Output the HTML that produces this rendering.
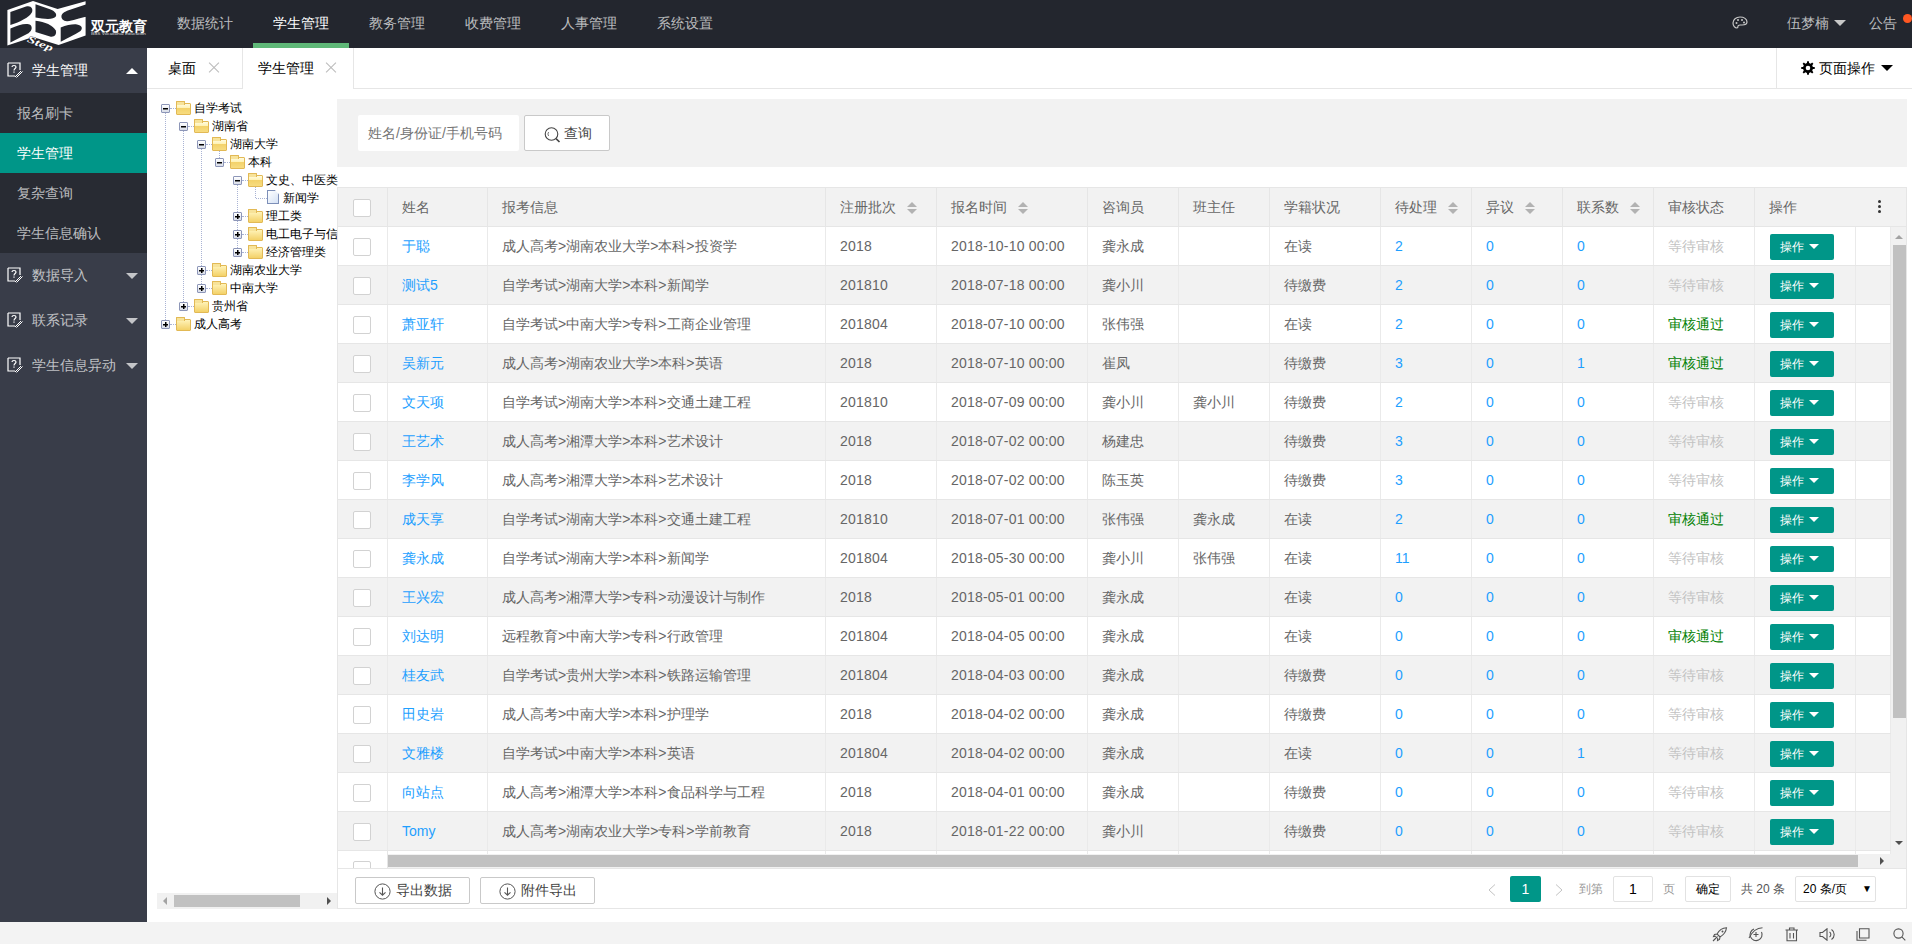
<!DOCTYPE html>
<html><head><meta charset="utf-8"><title>双元教育</title>
<style>
*{margin:0;padding:0;box-sizing:border-box}
html,body{width:1912px;height:944px;overflow:hidden;background:#fff;font-family:"Liberation Sans",sans-serif;font-size:14px;color:#666}
.abs{position:absolute}
/* header */
#hd{position:absolute;left:0;top:0;width:1912px;height:48px;background:#23262E;z-index:5}
#logo{overflow:visible}
#logo{position:absolute;left:0;top:0;width:150px;height:48px}
.nav{position:absolute;top:0;height:48px;line-height:46px;width:96px;text-align:center;color:rgba(255,255,255,.7);font-size:14px}
.nav.on{color:#fff}
.nav.on:after{content:"";position:absolute;left:0;right:0;bottom:0;height:5px;background:#5FB878}
/* sidebar */
#sd{position:absolute;left:0;top:48px;width:147px;height:874px;background:#393D49}
.si{position:absolute;left:0;width:147px;height:45px;line-height:45px;color:rgba(255,255,255,.7);padding-left:32px}
.si.top{color:#fff;background:#393D49}
.si i.ic{position:absolute;left:7px;top:15px;width:14px;height:15px}
.si em{position:absolute;left:126px;top:20px;width:0;height:0;border-left:6px solid transparent;border-right:6px solid transparent;border-top:6px solid rgba(255,255,255,.7)}
.si.top em{border-top:0;border-bottom:6px solid #fff;top:20px}
#sub{position:absolute;left:0;top:45px;width:147px;height:160px;background:#282B33}
.sub{position:absolute;left:0;width:147px;height:40px;line-height:40px;padding-left:17px;color:rgba(255,255,255,.7)}
.sub.on{background:#009688;color:#fff}
/* tabs */
#tabs{position:absolute;left:147px;top:48px;width:1765px;height:41px;background:#fff;border-bottom:1px solid #e6e6e6}
.tab{position:absolute;top:0;height:41px;line-height:40px;color:#000;font-size:14px}
.tab .x{position:absolute;top:15px;width:10px;height:10px}
.tab .x:before,.tab .x:after{content:"";position:absolute;left:-2px;top:4px;width:14px;height:1px;background:#bbb;transform:rotate(45deg)}
.tab .x:after{transform:rotate(-45deg)}
#pgop{position:absolute;left:1776px;top:48px;width:136px;height:40px;border-left:1px solid #e6e6e6;line-height:40px;color:#000}
/* tree */
#tree{position:absolute;left:147px;top:89px;width:190px;height:833px;background:#fff}
.ex{position:absolute;width:9px;height:9px;border:1px solid #8d96b8;background:linear-gradient(#fff,#d8dde8);border-radius:1px}
.ex b.h{position:absolute;left:1px;top:3px;width:5px;height:1px;background:#000;box-shadow:0 0.5px 0 #000}
.tl{position:absolute;width:1px;border-left:1px dotted #a9b3d4}
.th2{position:absolute;height:1px;border-top:1px dotted #a9b3d4}
.ex b.v{position:absolute;left:3px;top:1px;width:1px;height:5px;background:#000;box-shadow:0.5px 0 0 #000}
.fold{position:absolute;width:15px;height:12px;background:linear-gradient(#fff3b8,#f3d168);border:1px solid #e2b955;border-radius:1px}
.fold:before{content:"";position:absolute;left:-1px;top:-3px;width:7px;height:3px;background:#f7e39a;border:1px solid #e2b955;border-bottom:0;border-radius:1px 1px 0 0}
.fold.open{background:linear-gradient(#fffbe0 0,#fff3b8 35%,#f3d168 36%,#f7dc80 100%)}
.doc{position:absolute;width:12px;height:14px;border:1px solid #7d8fb8;background:linear-gradient(135deg,#fff,#d5e2f5);clip-path:polygon(0 0,65% 0,100% 30%,100% 100%,0 100%)}
.tt{position:absolute;font-size:12px;line-height:18px;color:#000;white-space:nowrap}
/* search */
#sp{position:absolute;left:337px;top:99px;width:1570px;height:68px;background:#f2f2f2}
#sinput{position:absolute;left:358px;top:115px;width:161px;height:36px;background:#fff;border-radius:2px;line-height:36px;padding-left:10px;color:#757575;font-size:14px}
#sbtn{position:absolute;left:524px;top:115px;width:86px;height:36px;background:#fff;border:1px solid #C9C9C9;border-radius:2px;line-height:34px;padding-left:39px;color:#444}
/* table */
#tbl{position:absolute;left:337px;top:187px;width:1570px;height:722px;border:1px solid #e6e6e6;overflow:hidden;background:#fff}
#th{position:absolute;left:0;top:0;width:1570px;height:39px;background:#f2f2f2;border-bottom:1px solid #e6e6e6}
.th,.td{position:absolute;top:0;height:38px;line-height:38px;padding-left:14px;border-right:1px solid #e6e6e6;white-space:nowrap;overflow:hidden}
.th{color:#666}
.td.c3,.td.c4{letter-spacing:0.2px}
.th.c12,.th.c13{border-right:0}
.td{border-right-color:#eaeaea}
#tb{position:absolute;left:0;top:39px;width:1570px;height:627px;overflow:hidden}
.tr{position:absolute;left:0;width:1553px;height:39px;border-bottom:1px solid #e6e6e6;background:#fff}
.tr.even{background:#f2f2f2}
.cb{position:absolute;left:15px;top:11px;width:18px;height:18px;border:1px solid #d2d2d2;background:#fff;border-radius:2px}
.lk{color:#1E9FFF}
.pass{color:#008000}
.wait{color:#c2c2c2}
.opbtn{position:absolute;left:15px;top:7px;width:64px;height:26px;background:#009688;color:#fff;border-radius:2px;line-height:26px;padding-left:10px;font-size:12px}
.opbtn em{position:absolute;left:39px;top:10px;border-left:5px solid transparent;border-right:5px solid transparent;border-top:5px solid #fff}
.sort{position:absolute;top:14px;width:10px;height:12px}
.sort em{position:absolute;left:0;border-left:5px solid transparent;border-right:5px solid transparent}
.sort .up{top:0;border-bottom:5px solid #b2b2b2}
.sort .dn{top:7px;border-top:5px solid #b2b2b2}
.more{position:absolute;left:22px;top:12px;width:3px;height:14px}
.more b{display:block;width:3px;height:3px;background:#333;border-radius:50%;margin-bottom:2px}
#vs{position:absolute;left:1553px;top:39px;width:17px;height:627px;background:#f1f1f1}
#vthumb{position:absolute;left:2px;top:18px;width:13px;height:473px;background:#c1c1c1}
#hs{position:absolute;left:0;top:666px;width:1570px;height:14px;background:#f1f1f1}
#hthumb{position:absolute;left:50px;top:1px;width:1470px;height:12px;background:#c1c1c1}
#tool{position:absolute;left:0;top:680px;width:1570px;height:41px;border-top:1px solid #e6e6e6;background:#fff}
.ebtn{position:absolute;top:8px;width:115px;height:27px;border:1px solid #C9C9C9;border-radius:2px;background:#fff;line-height:25px;padding-left:40px;color:#444;font-size:14px}
.ebtn i{position:absolute;left:19px;top:5px;width:15px;height:15px;border:1px solid #666;border-radius:50%}
/* footer */
#ft{position:absolute;left:0;top:922px;width:1912px;height:22px;background:#f3f3f3}
</style></head><body>
<div id="hd">
  <svg id="logo" width="150" height="48" viewBox="0 0 150 48">
    <path fill="#fff" d="M7.4,10 L33,1 L57.6,9 L85.6,1.3 L85.6,35.6 L58.6,45 L33,37 L7.4,45.5 Z"/>
    <g fill="#23262E">
      <path d="M10.4,12 L26,6.6 C31,5 33.5,9 31.8,12.5 C29.5,17 20,22 10.4,25 Z"/>
      <path d="M10.4,28.5 C19,24.5 27,22.5 30.5,25 C33,27.5 31.5,32 27,34 L10.4,42.5 Z"/>
      <path d="M35.5,4.2 L50,9.2 C55,11 57,14 55.8,16.5 C53.5,20 44,19 35.5,17.5 Z"/>
      <path d="M35.5,20.7 C45,21.5 53,25.5 55.8,30.5 C57,34.5 54,37.5 50,36.5 L35.5,32 Z"/>
      <path d="M61.5,15.5 C62.5,12.5 66,11.2 70,9.8 L88,3.8 L88,16.8 C79,17.3 72,21.5 67,21.3 C63,21 61,18.5 61.5,15.5 Z"/>
      <path d="M60.7,27.4 C67,25 73,24 77,24.5 C82,25.2 83,28.5 80.5,31 C78,33 70,37 60.7,41.7 Z"/>
    </g>
    <text x="0" y="0" fill="#fff" stroke="#23262E" stroke-width="0.6" paint-order="stroke" font-size="10" font-weight="bold" font-style="italic" font-family="Liberation Serif" textLength="27" lengthAdjust="spacingAndGlyphs" transform="translate(26.5,41.5) rotate(22)">Step</text>
    <text x="91" y="30.5" fill="#fff" font-size="13.6" font-weight="bold" font-family="Liberation Sans">双元教育</text>
    <text x="91" y="35" fill="#ddd" font-size="3.6" font-family="Liberation Sans" textLength="55" lengthAdjust="spacingAndGlyphs">BBS Vocational Education</text>
  </svg>
  <div class="nav" style="left:157px">数据统计</div>
  <div class="nav on" style="left:253px">学生管理</div>
  <div class="nav" style="left:349px">教务管理</div>
  <div class="nav" style="left:445px">收费管理</div>
  <div class="nav" style="left:541px">人事管理</div>
  <div class="nav" style="left:637px">系统设置</div>
  <svg class="abs" style="left:1732px;top:16px" width="16" height="14" viewBox="0 0 16 14"><path d="M8 1C4 1 1 3.5 1 7c0 3 2 5 4 5 1 0 1-1 1-2s1-1 2-1h2c3 0 5-1 5-3 0-3-3-5-7-5z" fill="none" stroke="#c8c8c8" stroke-width="1.2"/><circle cx="4.5" cy="7" r="1" fill="#c8c8c8"/><circle cx="6" cy="4" r="1" fill="#c8c8c8"/><circle cx="10" cy="4" r="1" fill="#c8c8c8"/><circle cx="12" cy="6.5" r="1" fill="#c8c8c8"/></svg>
  <div class="abs" style="left:1787px;top:0;line-height:46px;color:rgba(255,255,255,.7)">伍梦楠</div>
  <div class="abs" style="left:1834px;top:20px;border-left:6px solid transparent;border-right:6px solid transparent;border-top:6px solid #c8c8c8"></div>
  <div class="abs" style="left:1869px;top:0;line-height:46px;color:rgba(255,255,255,.7)">公告</div>
  <div class="abs" style="left:1903px;top:14px;width:9px;height:9px;border-radius:50%;background:#FF5722"></div>
</div>

<div id="sd">
  <div class="si top" style="top:0"><svg class="ic" width="16" height="16" viewBox="0 0 16 16" style="position:absolute;left:7px;top:14px"><path d="M1,1 H13 V8 M8,14 H1 V1" fill="none" stroke="#fff" stroke-width="1.2"/><path d="M5,5 C5,3 9,3 9,5 C9,6.5 7,6.5 7,8.5" fill="none" stroke="#fff" stroke-width="1.2"/><rect x="6.4" y="9.5" width="1.2" height="1.2" fill="#fff"/><path d="M8,15 L14,9 M9.5,15.5 L15.5,9.5" stroke="#fff" stroke-width="1"/></svg>学生管理<em></em></div>
  <div id="sub">
    <div class="sub" style="top:0">报名刷卡</div>
    <div class="sub on" style="top:40px">学生管理</div>
    <div class="sub" style="top:80px">复杂查询</div>
    <div class="sub" style="top:120px">学生信息确认</div>
  </div>
  <div class="si" style="top:205px"><svg class="ic" width="16" height="16" viewBox="0 0 16 16" style="position:absolute;left:7px;top:14px"><path d="M1,1 H13 V8 M8,14 H1 V1" fill="none" stroke="#fff" stroke-width="1.2"/><path d="M5,5 C5,3 9,3 9,5 C9,6.5 7,6.5 7,8.5" fill="none" stroke="#fff" stroke-width="1.2"/><rect x="6.4" y="9.5" width="1.2" height="1.2" fill="#fff"/><path d="M8,15 L14,9 M9.5,15.5 L15.5,9.5" stroke="#fff" stroke-width="1"/></svg>数据导入<em></em></div>
  <div class="si" style="top:250px"><svg class="ic" width="16" height="16" viewBox="0 0 16 16" style="position:absolute;left:7px;top:14px"><path d="M1,1 H13 V8 M8,14 H1 V1" fill="none" stroke="#fff" stroke-width="1.2"/><path d="M5,5 C5,3 9,3 9,5 C9,6.5 7,6.5 7,8.5" fill="none" stroke="#fff" stroke-width="1.2"/><rect x="6.4" y="9.5" width="1.2" height="1.2" fill="#fff"/><path d="M8,15 L14,9 M9.5,15.5 L15.5,9.5" stroke="#fff" stroke-width="1"/></svg>联系记录<em></em></div>
  <div class="si" style="top:295px"><svg class="ic" width="16" height="16" viewBox="0 0 16 16" style="position:absolute;left:7px;top:14px"><path d="M1,1 H13 V8 M8,14 H1 V1" fill="none" stroke="#fff" stroke-width="1.2"/><path d="M5,5 C5,3 9,3 9,5 C9,6.5 7,6.5 7,8.5" fill="none" stroke="#fff" stroke-width="1.2"/><rect x="6.4" y="9.5" width="1.2" height="1.2" fill="#fff"/><path d="M8,15 L14,9 M9.5,15.5 L15.5,9.5" stroke="#fff" stroke-width="1"/></svg>学生信息异动<em></em></div>
</div>

<div id="tabs">
  <div class="tab" style="left:0;width:95px;padding-left:21px">桌面<span class="x" style="left:62px"></span></div>
  <div class="tab" style="left:95px;width:112px;padding-left:15px;border-left:1px solid #e6e6e6;border-right:1px solid #e6e6e6;background:#fff;height:41px">学生管理<span class="x" style="left:83px"></span></div>
</div>
<div id="pgop"><svg class="abs" style="left:24px;top:13px" width="14" height="14" viewBox="0 0 14 14"><path fill="#000" fill-rule="evenodd" d="M11.88,5.91 L13.74,6.12 L13.74,7.88 L11.88,8.09 L11.22,9.68 L12.39,11.14 L11.14,12.39 L9.68,11.22 L8.09,11.88 L7.88,13.74 L6.12,13.74 L5.91,11.88 L4.32,11.22 L2.86,12.39 L1.61,11.14 L2.78,9.68 L2.12,8.09 L0.26,7.88 L0.26,6.12 L2.12,5.91 L2.78,4.32 L1.61,2.86 L2.86,1.61 L4.32,2.78 L5.91,2.12 L6.12,0.26 L7.88,0.26 L8.09,2.12 L9.68,2.78 L11.14,1.61 L12.39,2.86 L11.22,4.32 Z M9.30,7.00 A2.3,2.3 0 1 0 4.70,7.00 A2.3,2.3 0 1 0 9.30,7.00 Z"/></svg><span class="abs" style="left:42px;top:0">页面操作</span><span class="abs" style="left:104px;top:17px;border-left:6px solid transparent;border-right:6px solid transparent;border-top:6px solid #000"></span></div>

<div id="tree"><span class="th2" style="left:23px;top:235px;width:6px"></span><span class="th2" style="left:41px;top:217px;width:6px"></span><span class="th2" style="left:59px;top:199px;width:6px"></span><span class="th2" style="left:59px;top:181px;width:6px"></span><span class="th2" style="left:95px;top:163px;width:6px"></span><span class="th2" style="left:95px;top:145px;width:6px"></span><span class="th2" style="left:95px;top:127px;width:6px"></span><span class="th2" style="left:109px;top:109px;width:11px"></span><span class="th2" style="left:95px;top:91px;width:6px"></span><span class="th2" style="left:77px;top:73px;width:6px"></span><span class="th2" style="left:59px;top:55px;width:6px"></span><span class="th2" style="left:41px;top:37px;width:6px"></span><span class="th2" style="left:23px;top:19px;width:6px"></span><span class="tl" style="left:108px;top:97px;height:12px"></span><span class="tl" style="left:90px;top:91px;height:72px"></span><span class="tl" style="left:72px;top:61px;height:12px"></span><span class="tl" style="left:54px;top:55px;height:144px"></span><span class="tl" style="left:36px;top:37px;height:180px"></span><span class="tl" style="left:18px;top:19px;height:216px"></span><span class="ex" style="left:14px;top:15px"><b class="h"></b></span><span class="fold open" style="left:29px;top:14px"></span><span class="tt" style="left:47px;top:10px">自学考试</span><span class="ex" style="left:32px;top:33px"><b class="h"></b></span><span class="fold open" style="left:47px;top:32px"></span><span class="tt" style="left:65px;top:28px">湖南省</span><span class="ex" style="left:50px;top:51px"><b class="h"></b></span><span class="fold open" style="left:65px;top:50px"></span><span class="tt" style="left:83px;top:46px">湖南大学</span><span class="ex" style="left:68px;top:69px"><b class="h"></b></span><span class="fold open" style="left:83px;top:68px"></span><span class="tt" style="left:101px;top:64px">本科</span><span class="ex" style="left:86px;top:87px"><b class="h"></b></span><span class="fold open" style="left:101px;top:86px"></span><span class="tt" style="left:119px;top:82px">文史、中医类</span><span class="doc" style="left:120px;top:101px"></span><span class="tt" style="left:136px;top:100px">新闻学</span><span class="ex" style="left:86px;top:123px"><b class="h"></b><b class="v"></b></span><span class="fold" style="left:101px;top:122px"></span><span class="tt" style="left:119px;top:118px">理工类</span><span class="ex" style="left:86px;top:141px"><b class="h"></b><b class="v"></b></span><span class="fold" style="left:101px;top:140px"></span><span class="tt" style="left:119px;top:136px">电工电子与信息类</span><span class="ex" style="left:86px;top:159px"><b class="h"></b><b class="v"></b></span><span class="fold" style="left:101px;top:158px"></span><span class="tt" style="left:119px;top:154px">经济管理类</span><span class="ex" style="left:50px;top:177px"><b class="h"></b><b class="v"></b></span><span class="fold" style="left:65px;top:176px"></span><span class="tt" style="left:83px;top:172px">湖南农业大学</span><span class="ex" style="left:50px;top:195px"><b class="h"></b><b class="v"></b></span><span class="fold" style="left:65px;top:194px"></span><span class="tt" style="left:83px;top:190px">中南大学</span><span class="ex" style="left:32px;top:213px"><b class="h"></b><b class="v"></b></span><span class="fold" style="left:47px;top:212px"></span><span class="tt" style="left:65px;top:208px">贵州省</span><span class="ex" style="left:14px;top:231px"><b class="h"></b><b class="v"></b></span><span class="fold" style="left:29px;top:230px"></span><span class="tt" style="left:47px;top:226px">成人高考</span>
  <div class="abs" style="left:10px;top:804px;width:180px;height:16px;background:#f1f1f1"><div class="abs" style="left:17px;top:2px;width:126px;height:12px;background:#c1c1c1"></div><span class="abs" style="left:6px;top:4px;border-top:4px solid transparent;border-bottom:4px solid transparent;border-right:4px solid #a3a3a3"></span><span class="abs" style="left:170px;top:4px;border-top:4px solid transparent;border-bottom:4px solid transparent;border-left:4px solid #505050"></span></div>
</div>

<div id="sp"></div>
<div id="sinput">姓名/身份证/手机号码</div>
<div id="sbtn"><svg class="abs" style="left:18px;top:10px" width="18" height="18" viewBox="0 0 18 18"><circle cx="8.5" cy="8" r="6.3" fill="none" stroke="#444" stroke-width="1.1"/><path d="M13,12.6 L16.5,16" stroke="#444" stroke-width="1.6"/><path d="M5.6,6 A3.4,3.4 0 0 0 5.6,10" fill="none" stroke="#666" stroke-width="0.9"/></svg>查询</div>

<div id="tbl">
  <div id="th"><div class="th c0" style="left:0px;width:50px"><i class="cb"></i></div><div class="th c1" style="left:50px;width:100px"><span class="ht">姓名</span></div><div class="th c2" style="left:150px;width:338px"><span class="ht">报考信息</span></div><div class="th c3" style="left:488px;width:111px"><span class="ht">注册批次</span><span class="sort" style="left:81px"><em class="up"></em><em class="dn"></em></span></div><div class="th c4" style="left:599px;width:151px"><span class="ht">报名时间</span><span class="sort" style="left:81px"><em class="up"></em><em class="dn"></em></span></div><div class="th c5" style="left:750px;width:91px"><span class="ht">咨询员</span></div><div class="th c6" style="left:841px;width:91px"><span class="ht">班主任</span></div><div class="th c7" style="left:932px;width:111px"><span class="ht">学籍状况</span></div><div class="th c8" style="left:1043px;width:91px"><span class="ht">待处理</span><span class="sort" style="left:67px"><em class="up"></em><em class="dn"></em></span></div><div class="th c9" style="left:1134px;width:91px"><span class="ht">异议</span><span class="sort" style="left:53px"><em class="up"></em><em class="dn"></em></span></div><div class="th c10" style="left:1225px;width:91px"><span class="ht">联系数</span><span class="sort" style="left:67px"><em class="up"></em><em class="dn"></em></span></div><div class="th c11" style="left:1316px;width:101px"><span class="ht">审核状态</span></div><div class="th c12" style="left:1417px;width:101px"><span class="ht">操作</span></div><div class="th c13" style="left:1518px;width:35px"><span class="more"><b></b><b></b><b></b></span></div></div>
  <div id="tb"><div class="tr" style="top:0px"><div class="td c0" style="left:0px;width:50px"><i class="cb"></i></div><div class="td c1" style="left:50px;width:100px"><span class="lk">于聪</span></div><div class="td c2" style="left:150px;width:338px">成人高考&gt;湖南农业大学&gt;本科&gt;投资学</div><div class="td c3" style="left:488px;width:111px">2018</div><div class="td c4" style="left:599px;width:151px">2018-10-10 00:00</div><div class="td c5" style="left:750px;width:91px">龚永成</div><div class="td c6" style="left:841px;width:91px"></div><div class="td c7" style="left:932px;width:111px">在读</div><div class="td c8" style="left:1043px;width:91px"><span class="lk">2</span></div><div class="td c9" style="left:1134px;width:91px"><span class="lk">0</span></div><div class="td c10" style="left:1225px;width:91px"><span class="lk">0</span></div><div class="td c11" style="left:1316px;width:101px"><span class="wait">等待审核</span></div><div class="td c12" style="left:1417px;width:101px"><span class="opbtn">操作<em></em></span></div><div class="td c13" style="left:1518px;width:35px"></div></div><div class="tr even" style="top:39px"><div class="td c0" style="left:0px;width:50px"><i class="cb"></i></div><div class="td c1" style="left:50px;width:100px"><span class="lk">测试5</span></div><div class="td c2" style="left:150px;width:338px">自学考试&gt;湖南大学&gt;本科&gt;新闻学</div><div class="td c3" style="left:488px;width:111px">201810</div><div class="td c4" style="left:599px;width:151px">2018-07-18 00:00</div><div class="td c5" style="left:750px;width:91px">龚小川</div><div class="td c6" style="left:841px;width:91px"></div><div class="td c7" style="left:932px;width:111px">待缴费</div><div class="td c8" style="left:1043px;width:91px"><span class="lk">2</span></div><div class="td c9" style="left:1134px;width:91px"><span class="lk">0</span></div><div class="td c10" style="left:1225px;width:91px"><span class="lk">0</span></div><div class="td c11" style="left:1316px;width:101px"><span class="wait">等待审核</span></div><div class="td c12" style="left:1417px;width:101px"><span class="opbtn">操作<em></em></span></div><div class="td c13" style="left:1518px;width:35px"></div></div><div class="tr" style="top:78px"><div class="td c0" style="left:0px;width:50px"><i class="cb"></i></div><div class="td c1" style="left:50px;width:100px"><span class="lk">萧亚轩</span></div><div class="td c2" style="left:150px;width:338px">自学考试&gt;中南大学&gt;专科&gt;工商企业管理</div><div class="td c3" style="left:488px;width:111px">201804</div><div class="td c4" style="left:599px;width:151px">2018-07-10 00:00</div><div class="td c5" style="left:750px;width:91px">张伟强</div><div class="td c6" style="left:841px;width:91px"></div><div class="td c7" style="left:932px;width:111px">在读</div><div class="td c8" style="left:1043px;width:91px"><span class="lk">2</span></div><div class="td c9" style="left:1134px;width:91px"><span class="lk">0</span></div><div class="td c10" style="left:1225px;width:91px"><span class="lk">0</span></div><div class="td c11" style="left:1316px;width:101px"><span class="pass">审核通过</span></div><div class="td c12" style="left:1417px;width:101px"><span class="opbtn">操作<em></em></span></div><div class="td c13" style="left:1518px;width:35px"></div></div><div class="tr even" style="top:117px"><div class="td c0" style="left:0px;width:50px"><i class="cb"></i></div><div class="td c1" style="left:50px;width:100px"><span class="lk">吴新元</span></div><div class="td c2" style="left:150px;width:338px">成人高考&gt;湖南农业大学&gt;本科&gt;英语</div><div class="td c3" style="left:488px;width:111px">2018</div><div class="td c4" style="left:599px;width:151px">2018-07-10 00:00</div><div class="td c5" style="left:750px;width:91px">崔凤</div><div class="td c6" style="left:841px;width:91px"></div><div class="td c7" style="left:932px;width:111px">待缴费</div><div class="td c8" style="left:1043px;width:91px"><span class="lk">3</span></div><div class="td c9" style="left:1134px;width:91px"><span class="lk">0</span></div><div class="td c10" style="left:1225px;width:91px"><span class="lk">1</span></div><div class="td c11" style="left:1316px;width:101px"><span class="pass">审核通过</span></div><div class="td c12" style="left:1417px;width:101px"><span class="opbtn">操作<em></em></span></div><div class="td c13" style="left:1518px;width:35px"></div></div><div class="tr" style="top:156px"><div class="td c0" style="left:0px;width:50px"><i class="cb"></i></div><div class="td c1" style="left:50px;width:100px"><span class="lk">文天项</span></div><div class="td c2" style="left:150px;width:338px">自学考试&gt;湖南大学&gt;本科&gt;交通土建工程</div><div class="td c3" style="left:488px;width:111px">201810</div><div class="td c4" style="left:599px;width:151px">2018-07-09 00:00</div><div class="td c5" style="left:750px;width:91px">龚小川</div><div class="td c6" style="left:841px;width:91px">龚小川</div><div class="td c7" style="left:932px;width:111px">待缴费</div><div class="td c8" style="left:1043px;width:91px"><span class="lk">2</span></div><div class="td c9" style="left:1134px;width:91px"><span class="lk">0</span></div><div class="td c10" style="left:1225px;width:91px"><span class="lk">0</span></div><div class="td c11" style="left:1316px;width:101px"><span class="wait">等待审核</span></div><div class="td c12" style="left:1417px;width:101px"><span class="opbtn">操作<em></em></span></div><div class="td c13" style="left:1518px;width:35px"></div></div><div class="tr even" style="top:195px"><div class="td c0" style="left:0px;width:50px"><i class="cb"></i></div><div class="td c1" style="left:50px;width:100px"><span class="lk">王艺术</span></div><div class="td c2" style="left:150px;width:338px">成人高考&gt;湘潭大学&gt;本科&gt;艺术设计</div><div class="td c3" style="left:488px;width:111px">2018</div><div class="td c4" style="left:599px;width:151px">2018-07-02 00:00</div><div class="td c5" style="left:750px;width:91px">杨建忠</div><div class="td c6" style="left:841px;width:91px"></div><div class="td c7" style="left:932px;width:111px">待缴费</div><div class="td c8" style="left:1043px;width:91px"><span class="lk">3</span></div><div class="td c9" style="left:1134px;width:91px"><span class="lk">0</span></div><div class="td c10" style="left:1225px;width:91px"><span class="lk">0</span></div><div class="td c11" style="left:1316px;width:101px"><span class="wait">等待审核</span></div><div class="td c12" style="left:1417px;width:101px"><span class="opbtn">操作<em></em></span></div><div class="td c13" style="left:1518px;width:35px"></div></div><div class="tr" style="top:234px"><div class="td c0" style="left:0px;width:50px"><i class="cb"></i></div><div class="td c1" style="left:50px;width:100px"><span class="lk">李学风</span></div><div class="td c2" style="left:150px;width:338px">成人高考&gt;湘潭大学&gt;本科&gt;艺术设计</div><div class="td c3" style="left:488px;width:111px">2018</div><div class="td c4" style="left:599px;width:151px">2018-07-02 00:00</div><div class="td c5" style="left:750px;width:91px">陈玉英</div><div class="td c6" style="left:841px;width:91px"></div><div class="td c7" style="left:932px;width:111px">待缴费</div><div class="td c8" style="left:1043px;width:91px"><span class="lk">3</span></div><div class="td c9" style="left:1134px;width:91px"><span class="lk">0</span></div><div class="td c10" style="left:1225px;width:91px"><span class="lk">0</span></div><div class="td c11" style="left:1316px;width:101px"><span class="wait">等待审核</span></div><div class="td c12" style="left:1417px;width:101px"><span class="opbtn">操作<em></em></span></div><div class="td c13" style="left:1518px;width:35px"></div></div><div class="tr even" style="top:273px"><div class="td c0" style="left:0px;width:50px"><i class="cb"></i></div><div class="td c1" style="left:50px;width:100px"><span class="lk">成天享</span></div><div class="td c2" style="left:150px;width:338px">自学考试&gt;湖南大学&gt;本科&gt;交通土建工程</div><div class="td c3" style="left:488px;width:111px">201810</div><div class="td c4" style="left:599px;width:151px">2018-07-01 00:00</div><div class="td c5" style="left:750px;width:91px">张伟强</div><div class="td c6" style="left:841px;width:91px">龚永成</div><div class="td c7" style="left:932px;width:111px">在读</div><div class="td c8" style="left:1043px;width:91px"><span class="lk">2</span></div><div class="td c9" style="left:1134px;width:91px"><span class="lk">0</span></div><div class="td c10" style="left:1225px;width:91px"><span class="lk">0</span></div><div class="td c11" style="left:1316px;width:101px"><span class="pass">审核通过</span></div><div class="td c12" style="left:1417px;width:101px"><span class="opbtn">操作<em></em></span></div><div class="td c13" style="left:1518px;width:35px"></div></div><div class="tr" style="top:312px"><div class="td c0" style="left:0px;width:50px"><i class="cb"></i></div><div class="td c1" style="left:50px;width:100px"><span class="lk">龚永成</span></div><div class="td c2" style="left:150px;width:338px">自学考试&gt;湖南大学&gt;本科&gt;新闻学</div><div class="td c3" style="left:488px;width:111px">201804</div><div class="td c4" style="left:599px;width:151px">2018-05-30 00:00</div><div class="td c5" style="left:750px;width:91px">龚小川</div><div class="td c6" style="left:841px;width:91px">张伟强</div><div class="td c7" style="left:932px;width:111px">在读</div><div class="td c8" style="left:1043px;width:91px"><span class="lk">11</span></div><div class="td c9" style="left:1134px;width:91px"><span class="lk">0</span></div><div class="td c10" style="left:1225px;width:91px"><span class="lk">0</span></div><div class="td c11" style="left:1316px;width:101px"><span class="wait">等待审核</span></div><div class="td c12" style="left:1417px;width:101px"><span class="opbtn">操作<em></em></span></div><div class="td c13" style="left:1518px;width:35px"></div></div><div class="tr even" style="top:351px"><div class="td c0" style="left:0px;width:50px"><i class="cb"></i></div><div class="td c1" style="left:50px;width:100px"><span class="lk">王兴宏</span></div><div class="td c2" style="left:150px;width:338px">成人高考&gt;湘潭大学&gt;专科&gt;动漫设计与制作</div><div class="td c3" style="left:488px;width:111px">2018</div><div class="td c4" style="left:599px;width:151px">2018-05-01 00:00</div><div class="td c5" style="left:750px;width:91px">龚永成</div><div class="td c6" style="left:841px;width:91px"></div><div class="td c7" style="left:932px;width:111px">在读</div><div class="td c8" style="left:1043px;width:91px"><span class="lk">0</span></div><div class="td c9" style="left:1134px;width:91px"><span class="lk">0</span></div><div class="td c10" style="left:1225px;width:91px"><span class="lk">0</span></div><div class="td c11" style="left:1316px;width:101px"><span class="wait">等待审核</span></div><div class="td c12" style="left:1417px;width:101px"><span class="opbtn">操作<em></em></span></div><div class="td c13" style="left:1518px;width:35px"></div></div><div class="tr" style="top:390px"><div class="td c0" style="left:0px;width:50px"><i class="cb"></i></div><div class="td c1" style="left:50px;width:100px"><span class="lk">刘达明</span></div><div class="td c2" style="left:150px;width:338px">远程教育&gt;中南大学&gt;专科&gt;行政管理</div><div class="td c3" style="left:488px;width:111px">201804</div><div class="td c4" style="left:599px;width:151px">2018-04-05 00:00</div><div class="td c5" style="left:750px;width:91px">龚永成</div><div class="td c6" style="left:841px;width:91px"></div><div class="td c7" style="left:932px;width:111px">在读</div><div class="td c8" style="left:1043px;width:91px"><span class="lk">0</span></div><div class="td c9" style="left:1134px;width:91px"><span class="lk">0</span></div><div class="td c10" style="left:1225px;width:91px"><span class="lk">0</span></div><div class="td c11" style="left:1316px;width:101px"><span class="pass">审核通过</span></div><div class="td c12" style="left:1417px;width:101px"><span class="opbtn">操作<em></em></span></div><div class="td c13" style="left:1518px;width:35px"></div></div><div class="tr even" style="top:429px"><div class="td c0" style="left:0px;width:50px"><i class="cb"></i></div><div class="td c1" style="left:50px;width:100px"><span class="lk">桂友武</span></div><div class="td c2" style="left:150px;width:338px">自学考试&gt;贵州大学&gt;本科&gt;铁路运输管理</div><div class="td c3" style="left:488px;width:111px">201804</div><div class="td c4" style="left:599px;width:151px">2018-04-03 00:00</div><div class="td c5" style="left:750px;width:91px">龚永成</div><div class="td c6" style="left:841px;width:91px"></div><div class="td c7" style="left:932px;width:111px">待缴费</div><div class="td c8" style="left:1043px;width:91px"><span class="lk">0</span></div><div class="td c9" style="left:1134px;width:91px"><span class="lk">0</span></div><div class="td c10" style="left:1225px;width:91px"><span class="lk">0</span></div><div class="td c11" style="left:1316px;width:101px"><span class="wait">等待审核</span></div><div class="td c12" style="left:1417px;width:101px"><span class="opbtn">操作<em></em></span></div><div class="td c13" style="left:1518px;width:35px"></div></div><div class="tr" style="top:468px"><div class="td c0" style="left:0px;width:50px"><i class="cb"></i></div><div class="td c1" style="left:50px;width:100px"><span class="lk">田史岩</span></div><div class="td c2" style="left:150px;width:338px">成人高考&gt;中南大学&gt;本科&gt;护理学</div><div class="td c3" style="left:488px;width:111px">2018</div><div class="td c4" style="left:599px;width:151px">2018-04-02 00:00</div><div class="td c5" style="left:750px;width:91px">龚永成</div><div class="td c6" style="left:841px;width:91px"></div><div class="td c7" style="left:932px;width:111px">待缴费</div><div class="td c8" style="left:1043px;width:91px"><span class="lk">0</span></div><div class="td c9" style="left:1134px;width:91px"><span class="lk">0</span></div><div class="td c10" style="left:1225px;width:91px"><span class="lk">0</span></div><div class="td c11" style="left:1316px;width:101px"><span class="wait">等待审核</span></div><div class="td c12" style="left:1417px;width:101px"><span class="opbtn">操作<em></em></span></div><div class="td c13" style="left:1518px;width:35px"></div></div><div class="tr even" style="top:507px"><div class="td c0" style="left:0px;width:50px"><i class="cb"></i></div><div class="td c1" style="left:50px;width:100px"><span class="lk">文雅楼</span></div><div class="td c2" style="left:150px;width:338px">自学考试&gt;中南大学&gt;本科&gt;英语</div><div class="td c3" style="left:488px;width:111px">201804</div><div class="td c4" style="left:599px;width:151px">2018-04-02 00:00</div><div class="td c5" style="left:750px;width:91px">龚永成</div><div class="td c6" style="left:841px;width:91px"></div><div class="td c7" style="left:932px;width:111px">在读</div><div class="td c8" style="left:1043px;width:91px"><span class="lk">0</span></div><div class="td c9" style="left:1134px;width:91px"><span class="lk">0</span></div><div class="td c10" style="left:1225px;width:91px"><span class="lk">1</span></div><div class="td c11" style="left:1316px;width:101px"><span class="wait">等待审核</span></div><div class="td c12" style="left:1417px;width:101px"><span class="opbtn">操作<em></em></span></div><div class="td c13" style="left:1518px;width:35px"></div></div><div class="tr" style="top:546px"><div class="td c0" style="left:0px;width:50px"><i class="cb"></i></div><div class="td c1" style="left:50px;width:100px"><span class="lk">向站点</span></div><div class="td c2" style="left:150px;width:338px">成人高考&gt;湘潭大学&gt;本科&gt;食品科学与工程</div><div class="td c3" style="left:488px;width:111px">2018</div><div class="td c4" style="left:599px;width:151px">2018-04-01 00:00</div><div class="td c5" style="left:750px;width:91px">龚永成</div><div class="td c6" style="left:841px;width:91px"></div><div class="td c7" style="left:932px;width:111px">待缴费</div><div class="td c8" style="left:1043px;width:91px"><span class="lk">0</span></div><div class="td c9" style="left:1134px;width:91px"><span class="lk">0</span></div><div class="td c10" style="left:1225px;width:91px"><span class="lk">0</span></div><div class="td c11" style="left:1316px;width:101px"><span class="wait">等待审核</span></div><div class="td c12" style="left:1417px;width:101px"><span class="opbtn">操作<em></em></span></div><div class="td c13" style="left:1518px;width:35px"></div></div><div class="tr even" style="top:585px"><div class="td c0" style="left:0px;width:50px"><i class="cb"></i></div><div class="td c1" style="left:50px;width:100px"><span class="lk">Tomy</span></div><div class="td c2" style="left:150px;width:338px">成人高考&gt;湖南农业大学&gt;专科&gt;学前教育</div><div class="td c3" style="left:488px;width:111px">2018</div><div class="td c4" style="left:599px;width:151px">2018-01-22 00:00</div><div class="td c5" style="left:750px;width:91px">龚小川</div><div class="td c6" style="left:841px;width:91px"></div><div class="td c7" style="left:932px;width:111px">待缴费</div><div class="td c8" style="left:1043px;width:91px"><span class="lk">0</span></div><div class="td c9" style="left:1134px;width:91px"><span class="lk">0</span></div><div class="td c10" style="left:1225px;width:91px"><span class="lk">0</span></div><div class="td c11" style="left:1316px;width:101px"><span class="wait">等待审核</span></div><div class="td c12" style="left:1417px;width:101px"><span class="opbtn">操作<em></em></span></div><div class="td c13" style="left:1518px;width:35px"></div></div><div class="tr" style="top:624px"><div class="td c0" style="left:0px;width:50px"><i class="cb"></i></div><div class="td c1" style="left:50px;width:100px"><span class="lk"></span></div><div class="td c2" style="left:150px;width:338px"></div><div class="td c3" style="left:488px;width:111px"></div><div class="td c4" style="left:599px;width:151px"></div><div class="td c5" style="left:750px;width:91px"></div><div class="td c6" style="left:841px;width:91px"></div><div class="td c7" style="left:932px;width:111px"></div><div class="td c8" style="left:1043px;width:91px"><span class="lk"></span></div><div class="td c9" style="left:1134px;width:91px"><span class="lk"></span></div><div class="td c10" style="left:1225px;width:91px"><span class="lk"></span></div><div class="td c11" style="left:1316px;width:101px"></div><div class="td c12" style="left:1417px;width:101px"></div><div class="td c13" style="left:1518px;width:35px"></div></div></div>
  <div id="vs"><div id="vthumb"></div><span class="abs" style="left:4px;top:8px;border-left:4px solid transparent;border-right:4px solid transparent;border-bottom:4px solid #a3a3a3"></span><span class="abs" style="left:4px;top:614px;border-left:4px solid transparent;border-right:4px solid transparent;border-top:4px solid #505050"></span></div>
  <div id="hs"><div id="hthumb"></div><span class="abs" style="left:1542px;top:3px;border-top:4px solid transparent;border-bottom:4px solid transparent;border-left:4px solid #505050"></span></div><div class="abs" style="left:0;top:663px;width:50px;height:17px;background:#fff;border-right:1px solid #e6e6e6;overflow:hidden"><i class="cb" style="top:10px"></i></div>
  <div id="tool">
    <div class="ebtn" style="left:17px"><svg class="abs" style="left:18px;top:5px" width="17" height="17" viewBox="0 0 17 17"><circle cx="8.5" cy="8.5" r="7.6" fill="none" stroke="#555" stroke-width="1"/><path d="M8.5,4.5 V12 M5.5,9.3 L8.5,12.2 L11.5,9.3" fill="none" stroke="#555" stroke-width="1.1"/></svg>导出数据</div>
    <div class="ebtn" style="left:142px"><svg class="abs" style="left:18px;top:5px" width="17" height="17" viewBox="0 0 17 17"><circle cx="8.5" cy="8.5" r="7.6" fill="none" stroke="#555" stroke-width="1"/><path d="M8.5,4.5 V12 M5.5,9.3 L8.5,12.2 L11.5,9.3" fill="none" stroke="#555" stroke-width="1.1"/></svg>附件导出</div>
  </div>
</div>


<div class="abs" style="left:1488px;top:883px"><svg width="8" height="12" viewBox="0 0 8 12"><path d="M7,0.5 L1,6 L7,11.5" fill="none" stroke="#c2c2c2" stroke-width="1"/></svg></div>
<div class="abs" style="left:1510px;top:876px;width:31px;height:26px;background:#009688;border-radius:2px;color:#fff;text-align:center;line-height:26px;font-size:14px">1</div>
<div class="abs" style="left:1555px;top:883px"><svg width="8" height="12" viewBox="0 0 8 12"><path d="M1,0.5 L7,6 L1,11.5" fill="none" stroke="#c2c2c2" stroke-width="1"/></svg></div>
<div class="abs" style="left:1579px;top:876px;line-height:26px;font-size:12px;color:#999">到第</div>
<div class="abs" style="left:1613px;top:876px;width:40px;height:26px;border:1px solid #e2e2e2;border-radius:2px;text-align:center;line-height:24px;font-size:14px;color:#000">1</div>
<div class="abs" style="left:1663px;top:876px;line-height:26px;font-size:12px;color:#999">页</div>
<div class="abs" style="left:1685px;top:876px;width:46px;height:26px;border:1px solid #e2e2e2;border-radius:2px;text-align:center;line-height:24px;font-size:12px;color:#000">确定</div>
<div class="abs" style="left:1741px;top:876px;line-height:26px;font-size:12px;color:#555;word-spacing:0">共 20 条</div>
<div class="abs" style="left:1795px;top:876px;width:81px;height:26px;border:1px solid #e2e2e2;border-radius:2px;line-height:24px;font-size:12px;color:#000;padding-left:7px">20 条/页<span class="abs" style="left:66px;top:0;font-size:10px">▼</span></div>
<div id="ft">
<svg class="abs" style="left:1712px;top:5px" width="16" height="15" viewBox="0 0 16 15"><path d="M14.5,0.8 C10,1 7,3.5 5,7 L8,10 C11.5,8 14,5 14.5,0.8 Z M5,7 L2.5,7.5 L1.5,9.5 L4,9.3 M8,10 L7.5,12.5 L5.5,13.5 L5.7,11 M5.5,9.5 L1,14" fill="none" stroke="#555" stroke-width="1.1"/><circle cx="10.5" cy="4.5" r="1" fill="#555"/></svg>
<svg class="abs" style="left:1748px;top:5px" width="16" height="15" viewBox="0 0 16 15"><path d="M13.5,5 A6,6 0 1 1 6,2" fill="none" stroke="#555" stroke-width="1.1"/><path d="M8,5 V10 M5.5,7.5 H10.5" stroke="#555" stroke-width="1.1"/><path d="M1,11 C4,5 9,1 14.5,0.8" fill="none" stroke="#555" stroke-width="1.1"/></svg>
<svg class="abs" style="left:1785px;top:5px" width="14" height="15" viewBox="0 0 14 15"><path d="M0.5,3 H13 M4.5,3 V1 H9 V3 M2,3 V13.8 H11.5 V3 M5,6 V11.5 M8.5,6 V11.5" fill="none" stroke="#555" stroke-width="1.1"/></svg>
<svg class="abs" style="left:1819px;top:6px" width="16" height="13" viewBox="0 0 16 13"><path d="M1,4.5 H3.5 L8,0.8 V12.2 L3.5,8.5 H1 Z" fill="none" stroke="#555" stroke-width="1.1"/><path d="M10.5,4 A3,3 0 0 1 10.5,9 M12.5,1.5 A6,6 0 0 1 12.5,11.5" fill="none" stroke="#555" stroke-width="1.1"/></svg>
<svg class="abs" style="left:1856px;top:6px" width="14" height="13" viewBox="0 0 14 13"><path d="M1,3 V12.3 H10.5 M3.5,0.8 H13 V10 H3.5 Z" fill="none" stroke="#555" stroke-width="1.1"/></svg>
<svg class="abs" style="left:1893px;top:6px" width="13" height="13" viewBox="0 0 13 13"><circle cx="5.5" cy="5.5" r="4.6" fill="none" stroke="#555" stroke-width="1.1"/><path d="M8.8,8.8 L12.3,12.3" stroke="#555" stroke-width="1.1"/></svg>
</div>
</body></html>
